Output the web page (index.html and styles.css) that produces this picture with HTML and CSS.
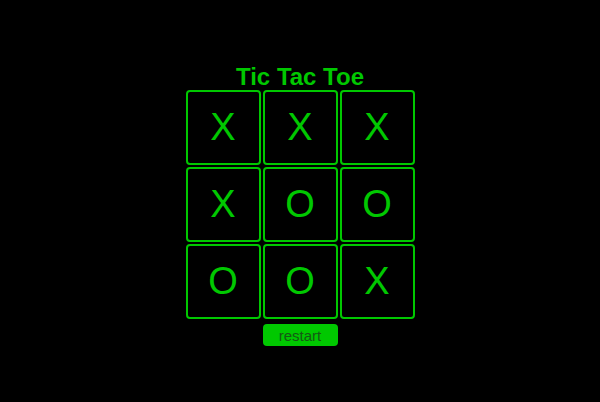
FILE: index.html
```html
<!DOCTYPE html>
<html>
<head>
<meta charset="utf-8">
<link rel="stylesheet" href="styles.css">
</head>
<body>
<div class="game">
  <div class="title">Tic Tac Toe</div>
  <div class="board">
    <div class="cell">X</div>
    <div class="cell">X</div>
    <div class="cell">X</div>
    <div class="cell">X</div>
    <div class="cell">O</div>
    <div class="cell">O</div>
    <div class="cell">O</div>
    <div class="cell">O</div>
    <div class="cell">X</div>
  </div>
  <button class="restart">restart</button>
</div>
</body>
</html>
```
FILE: styles.css
```css
html, body {
  margin: 0;
  height: 100%;
  background: #000;
}
body {
  font-family: "Liberation Sans", Arial, sans-serif;
}
.game {
  display: flex;
  flex-direction: column;
  align-items: center;
  padding-top: 63px;
}
.title {
  color: #00c800;
  font-weight: bold;
  font-size: 24px;
  line-height: 27px;
}
.board {
  display: grid;
  grid-template-columns: repeat(3, 75px);
  grid-auto-rows: 75px;
  gap: 2px;
}
.cell {
  box-sizing: border-box;
  border: 2px solid #00c800;
  border-radius: 4px;
  display: flex;
  align-items: center;
  justify-content: center;
  color: #00c800;
  font-size: 38px;
}
.restart {
  margin-top: 5px;
  width: 75px;
  height: 22px;
  border: none;
  border-radius: 4px;
  background: #00c800;
  color: #145a14;
  font-family: "Liberation Sans", Arial, sans-serif;
  font-size: 15px;
  padding: 0;
}
```
